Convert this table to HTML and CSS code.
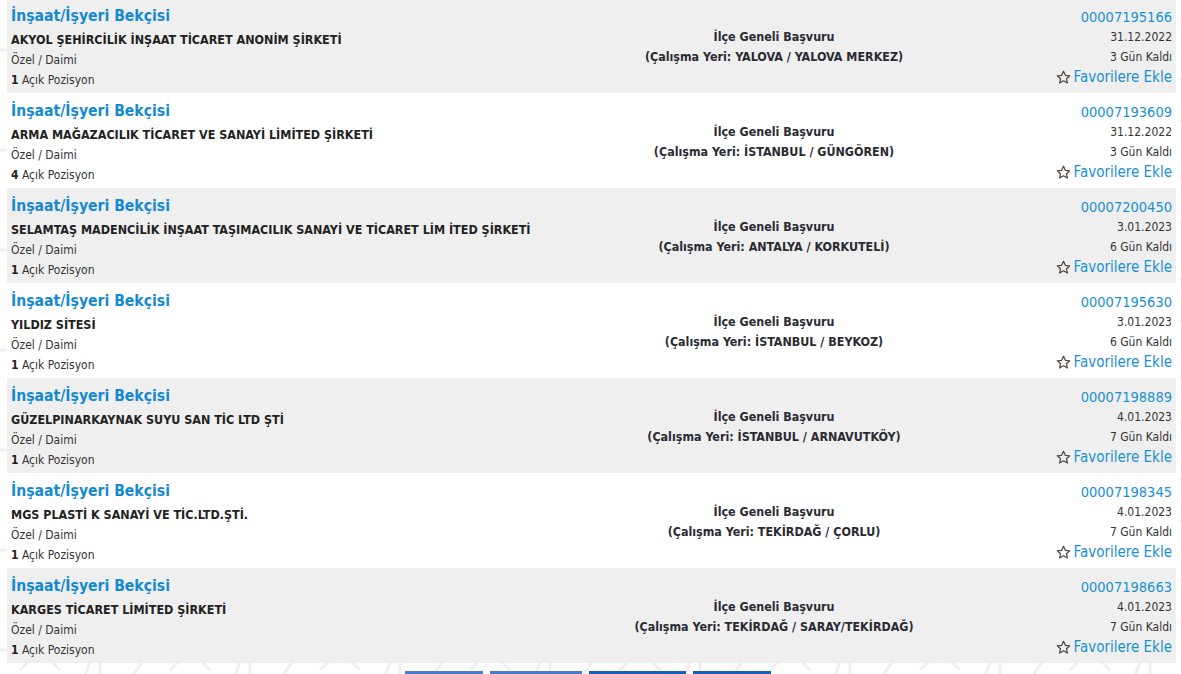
FILE: index.html
```html
<!DOCTYPE html>
<html lang="tr">
<head>
<meta charset="utf-8">
<title>İlanlar</title>
<link rel="stylesheet" href="styles.css">
</head>
<body>
<div class="list">
  <div class="row alt">
    <div class="col-left">
      <a class="title">İnşaat/İşyeri Bekçisi</a>
      <div class="company">AKYOL ŞEHİRCİLİK İNŞAAT TİCARET ANONİM ŞİRKETİ</div>
      <div class="line">Özel / Daimi</div>
      <div class="line"><b>1</b> Açık Pozisyon</div>
    </div>
    <div class="col-mid">
      <div>İlçe Geneli Başvuru</div>
      <div>(Çalışma Yeri: YALOVA / YALOVA MERKEZ)</div>
    </div>
    <div class="col-right">
      <a class="no">00007195166</a>
      <div class="line">31.12.2022</div>
      <div class="line">3 Gün Kaldı</div>
      <a class="fav"><svg class="star" viewBox="0 0 14 14"><path d="M7 1.2l1.75 3.75 4.05.45-3.02 2.75.85 4-3.63-2.08-3.63 2.08.85-4L1.2 5.4l4.05-.45z"/></svg>Favorilere Ekle</a>
    </div>
  </div>
  <div class="row">
    <div class="col-left">
      <a class="title">İnşaat/İşyeri Bekçisi</a>
      <div class="company">ARMA MAĞAZACILIK TİCARET VE SANAYİ LİMİTED ŞİRKETİ</div>
      <div class="line">Özel / Daimi</div>
      <div class="line"><b>4</b> Açık Pozisyon</div>
    </div>
    <div class="col-mid">
      <div>İlçe Geneli Başvuru</div>
      <div>(Çalışma Yeri: İSTANBUL / GÜNGÖREN)</div>
    </div>
    <div class="col-right">
      <a class="no">00007193609</a>
      <div class="line">31.12.2022</div>
      <div class="line">3 Gün Kaldı</div>
      <a class="fav"><svg class="star" viewBox="0 0 14 14"><path d="M7 1.2l1.75 3.75 4.05.45-3.02 2.75.85 4-3.63-2.08-3.63 2.08.85-4L1.2 5.4l4.05-.45z"/></svg>Favorilere Ekle</a>
    </div>
  </div>
  <div class="row alt">
    <div class="col-left">
      <a class="title">İnşaat/İşyeri Bekçisi</a>
      <div class="company">SELAMTAŞ MADENCİLİK İNŞAAT TAŞIMACILIK SANAYİ VE TİCARET LİM İTED ŞİRKETİ</div>
      <div class="line">Özel / Daimi</div>
      <div class="line"><b>1</b> Açık Pozisyon</div>
    </div>
    <div class="col-mid">
      <div>İlçe Geneli Başvuru</div>
      <div>(Çalışma Yeri: ANTALYA / KORKUTELİ)</div>
    </div>
    <div class="col-right">
      <a class="no">00007200450</a>
      <div class="line">3.01.2023</div>
      <div class="line">6 Gün Kaldı</div>
      <a class="fav"><svg class="star" viewBox="0 0 14 14"><path d="M7 1.2l1.75 3.75 4.05.45-3.02 2.75.85 4-3.63-2.08-3.63 2.08.85-4L1.2 5.4l4.05-.45z"/></svg>Favorilere Ekle</a>
    </div>
  </div>
  <div class="row">
    <div class="col-left">
      <a class="title">İnşaat/İşyeri Bekçisi</a>
      <div class="company">YILDIZ SİTESİ</div>
      <div class="line">Özel / Daimi</div>
      <div class="line"><b>1</b> Açık Pozisyon</div>
    </div>
    <div class="col-mid">
      <div>İlçe Geneli Başvuru</div>
      <div>(Çalışma Yeri: İSTANBUL / BEYKOZ)</div>
    </div>
    <div class="col-right">
      <a class="no">00007195630</a>
      <div class="line">3.01.2023</div>
      <div class="line">6 Gün Kaldı</div>
      <a class="fav"><svg class="star" viewBox="0 0 14 14"><path d="M7 1.2l1.75 3.75 4.05.45-3.02 2.75.85 4-3.63-2.08-3.63 2.08.85-4L1.2 5.4l4.05-.45z"/></svg>Favorilere Ekle</a>
    </div>
  </div>
  <div class="row alt">
    <div class="col-left">
      <a class="title">İnşaat/İşyeri Bekçisi</a>
      <div class="company">GÜZELPINARKAYNAK SUYU SAN TİC LTD ŞTİ</div>
      <div class="line">Özel / Daimi</div>
      <div class="line"><b>1</b> Açık Pozisyon</div>
    </div>
    <div class="col-mid">
      <div>İlçe Geneli Başvuru</div>
      <div>(Çalışma Yeri: İSTANBUL / ARNAVUTKÖY)</div>
    </div>
    <div class="col-right">
      <a class="no">00007198889</a>
      <div class="line">4.01.2023</div>
      <div class="line">7 Gün Kaldı</div>
      <a class="fav"><svg class="star" viewBox="0 0 14 14"><path d="M7 1.2l1.75 3.75 4.05.45-3.02 2.75.85 4-3.63-2.08-3.63 2.08.85-4L1.2 5.4l4.05-.45z"/></svg>Favorilere Ekle</a>
    </div>
  </div>
  <div class="row">
    <div class="col-left">
      <a class="title">İnşaat/İşyeri Bekçisi</a>
      <div class="company">MGS PLASTİ K SANAYİ VE TİC.LTD.ŞTİ.</div>
      <div class="line">Özel / Daimi</div>
      <div class="line"><b>1</b> Açık Pozisyon</div>
    </div>
    <div class="col-mid">
      <div>İlçe Geneli Başvuru</div>
      <div>(Çalışma Yeri: TEKİRDAĞ / ÇORLU)</div>
    </div>
    <div class="col-right">
      <a class="no">00007198345</a>
      <div class="line">4.01.2023</div>
      <div class="line">7 Gün Kaldı</div>
      <a class="fav"><svg class="star" viewBox="0 0 14 14"><path d="M7 1.2l1.75 3.75 4.05.45-3.02 2.75.85 4-3.63-2.08-3.63 2.08.85-4L1.2 5.4l4.05-.45z"/></svg>Favorilere Ekle</a>
    </div>
  </div>
  <div class="row alt">
    <div class="col-left">
      <a class="title">İnşaat/İşyeri Bekçisi</a>
      <div class="company">KARGES TİCARET LİMİTED ŞİRKETİ</div>
      <div class="line">Özel / Daimi</div>
      <div class="line"><b>1</b> Açık Pozisyon</div>
    </div>
    <div class="col-mid">
      <div>İlçe Geneli Başvuru</div>
      <div>(Çalışma Yeri: TEKİRDAĞ / SARAY/TEKİRDAĞ)</div>
    </div>
    <div class="col-right">
      <a class="no">00007198663</a>
      <div class="line">4.01.2023</div>
      <div class="line">7 Gün Kaldı</div>
      <a class="fav"><svg class="star" viewBox="0 0 14 14"><path d="M7 1.2l1.75 3.75 4.05.45-3.02 2.75.85 4-3.63-2.08-3.63 2.08.85-4L1.2 5.4l4.05-.45z"/></svg>Favorilere Ekle</a>
    </div>
  </div>
</div>
<div class="pager">
  <span class="pbtn light w1"></span>
  <span class="pbtn light w2"></span>
  <span class="pbtn dark w3"></span>
  <span class="pbtn dark w1"></span>
</div>
</body>
</html>
```

FILE: styles.css
```css
html, body {
  margin: 0;
  padding: 0;
}
body {
  background-color: #ffffff;
  background-image: url("data:image/svg+xml,%3Csvg xmlns='http://www.w3.org/2000/svg' width='150' height='100' viewBox='0 0 150 100'%3E%3Cg fill='none' stroke='%23efefef' stroke-width='3'%3E%3Cpath d='M0 50 L40 50 M20 30 L60 70 M20 70 L60 30 M75 0 L95 50 L75 100 M130 20 L150 50 L130 80 M100 10 L100 90'/%3E%3C/g%3E%3C/svg%3E");
  font-family: "DejaVu Sans Condensed", "DejaVu Sans", sans-serif;
  color: #333;
  overflow: hidden;
}
.list {
  width: 1169px;
  margin: -2px 0 0 7px;
}
.row {
  display: grid;
  grid-template-columns: 584px 366px 1fr;
  height: 95px;
  background: #ffffff;
  box-sizing: border-box;
}
.row.alt {
  background: #efefef;
}
.col-left {
  padding: 8px 0 3px 4px;
}
.title {
  display: block;
  font-size: 15.6px;
  font-weight: bold;
  line-height: 20px;
  color: #1589d1;
  margin-bottom: 4px;
  white-space: nowrap;
}
.company {
  font-size: 12.45px;
  font-weight: bold;
  line-height: 20px;
  color: #222;
  white-space: nowrap;
}
.line {
  font-size: 12px;
  line-height: 20px;
  color: #333;
  white-space: nowrap;
}
.line b {
  color: #222;
}
.col-mid {
  display: flex;
  flex-direction: column;
  justify-content: center;
  align-items: center;
  padding-top: 2px;
  font-size: 12.4px;
  font-weight: bold;
  line-height: 20px;
  color: #2a2a33;
  white-space: nowrap;
}
.col-right {
  padding: 9px 4px 0 0;
  text-align: right;
}
.no {
  display: block;
  font-size: 14.5px;
  line-height: 20px;
  color: #1a8fd6;
}
.fav {
  display: flex;
  justify-content: flex-end;
  align-items: center;
  gap: 3px;
  font-size: 15px;
  line-height: 20px;
  color: #1a8fd6;
}
.star {
  width: 15px;
  height: 15px;
  fill: none;
  stroke: #4d4540;
  stroke-width: 1.15;
  stroke-linejoin: round;
}
.pager {
  display: flex;
  justify-content: center;
  gap: 7px;
  margin-top: 8px;
  padding-right: 6px;
}
.pbtn {
  display: block;
  height: 30px;
  border-top: 3px solid #4a7ccb;
  background: #fff;
}
.pbtn.dark {
  border-top-color: #1a5fb0;
}
.w1 { width: 78px; }
.w2 { width: 92px; }
.w3 { width: 97px; }
```
